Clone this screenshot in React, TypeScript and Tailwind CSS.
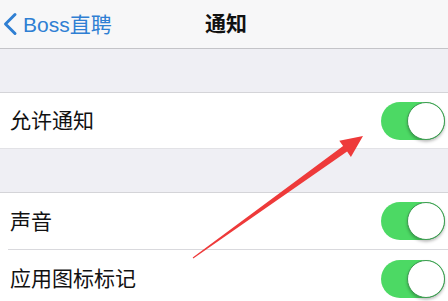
const CJK = "'Liberation Sans', 'Noto Sans CJK SC', sans-serif"

function Toggle() {
  return (
    <div className="relative w-[64px] h-[38px] rounded-full bg-[#4cd964] shrink-0">
      <div className="absolute right-0 top-0 w-[38px] h-[38px] rounded-full bg-white border border-[#3e9a52] shadow-[0_2px_3px_rgba(0,0,0,0.25)]" />
    </div>
  )
}

function Row({ label, last = false }: { label: string; last?: boolean }) {
  return (
    <div className="bg-white pl-[8px]">
      <div className={`flex items-center justify-between h-[57px] pl-[2px] pr-[3px] ${last ? '' : 'border-b border-[#d9d9dd]'}`}>
        <span className="text-[21px] text-[#111] leading-none" style={{ fontFamily: CJK }}>{label}</span>
        <Toggle />
      </div>
    </div>
  )
}

export default function App() {
  return (
    <div className="relative w-[448px] h-[301px] overflow-hidden bg-[#efeff4]" style={{ fontFamily: CJK }}>
      {/* nav */}
      <div className="relative h-[49px] bg-[#f7f7f8] border-b border-[#c4c4c8] flex items-center">
        <div className="flex items-center pl-[2px] text-[#2f7fd3]">
          <svg width="16" height="24" viewBox="0 0 16 24" fill="none">
            <path d="M13 2.5L3.5 12L13 21.5" stroke="#2f7fd3" strokeWidth="3" strokeLinecap="round" strokeLinejoin="round" />
          </svg>
          <span className="ml-[5px] text-[21px] leading-none">Boss直聘</span>
        </div>
        <span className="absolute left-[205px] top-[13px] text-[21px] leading-none font-semibold text-[#111]">通知</span>
      </div>

      <div className="h-[44px] border-b border-[#d4d4d8]" />

      <div className="bg-white flex items-center justify-between h-[56px] pl-[10px] pr-[3px] border-b border-[#e2e2e6]">
        <span className="text-[21px] text-[#111] leading-none">允许通知</span>
        <Toggle />
      </div>

      <div className="h-[44px] border-b border-[#d4d4d8]" />

      <Row label="声音" />
      <Row label="应用图标标记" last />

      {/* annotation arrow */}
      <svg className="absolute left-0 top-0 pointer-events-none" width="448" height="301" viewBox="0 0 448 301">
        <polygon
          points="192.7,257.6 343.1,146 339.3,140.7 363,136 350.9,156.9 347.1,151.6 193.3,258.4"
          fill="#ee3a3a"
        />
      </svg>
    </div>
  )
}
